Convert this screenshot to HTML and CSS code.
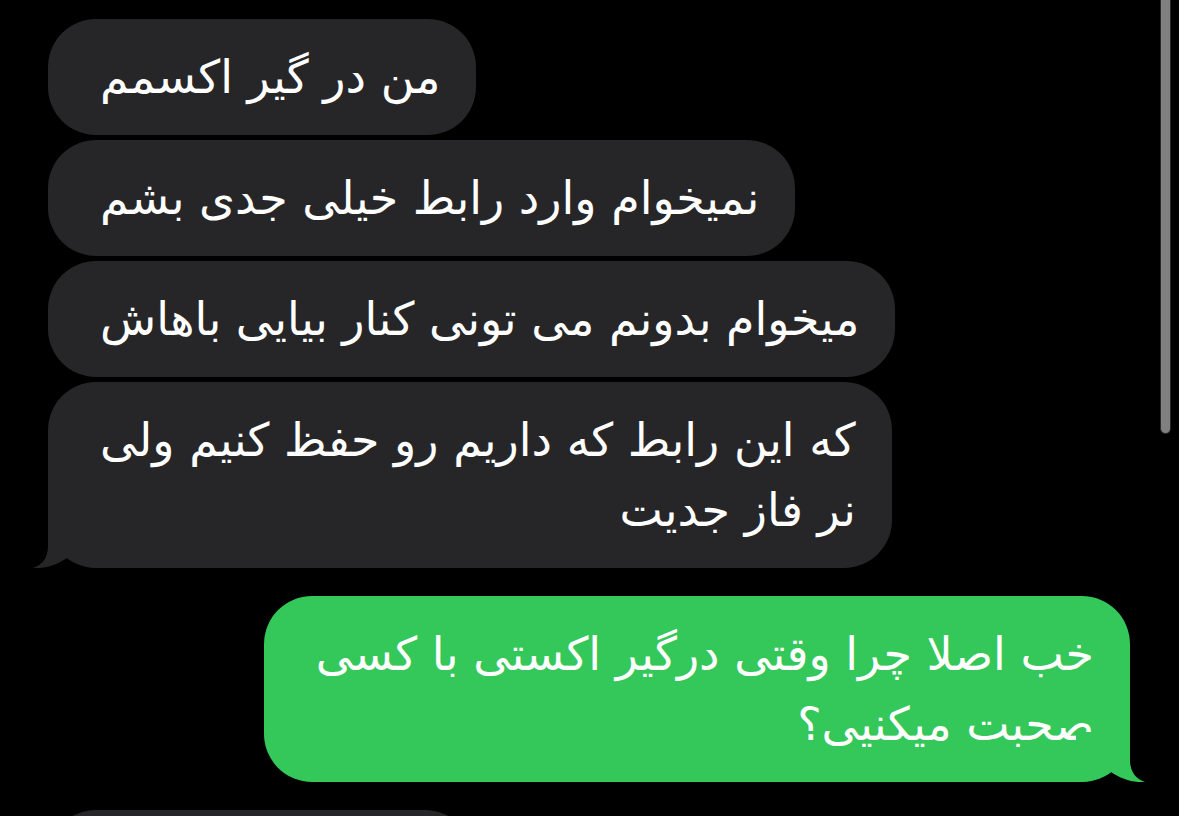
FILE: index.html
```html
<!DOCTYPE html>
<html lang="fa">
<head>
<meta charset="utf-8">
<link rel="stylesheet" href="styles.css">
</head>
<body>
<div class="chat">
  <div class="row in">
    <div class="bubble gray" dir="rtl">من در گیر اکسمم</div>
  </div>
  <div class="row in">
    <div class="bubble gray" dir="rtl">نمیخوام وارد رابط خیلی جدی بشم</div>
  </div>
  <div class="row in">
    <div class="bubble gray" dir="rtl">میخوام بدونم می تونی کنار بیایی باهاش</div>
  </div>
  <div class="row in">
    <div class="bubble gray tailed" dir="rtl">که این رابط که داریم رو حفظ کنیم ولی<br>نر فاز جدیت<svg class="tail tail-left" width="70" height="50" viewBox="0 0 70 50"><path d="M16,0 L16,28 C16,40 10,47 1,50 C12,51 25,47 35,40 C45,47 56,50 70,50 L70,0 Z"/></svg></div>
  </div>
  <div class="row out">
    <div class="bubble green tailed" dir="rtl">خب اصلا چرا وقتی درگیر اکستی با کسی<br>صحبت میکنیی؟<svg class="tail tail-right" width="70" height="50" viewBox="0 0 70 50"><path d="M16,0 L16,28 C16,40 10,47 1,50 C12,51 25,47 35,40 C45,47 56,50 70,50 L70,0 Z"/></svg></div>
  </div>
  <div class="row in next">
    <div class="bubble gray stub"></div>
  </div>
</div>
<div class="scrollbar"></div>
</body>
</html>
```
FILE: styles.css
```css
html, body {
  margin: 0;
  padding: 0;
  background: #000;
  height: 100%;
  overflow: hidden;
}
body {
  position: relative;
  font-family: "DejaVu Sans", "Noto Sans", sans-serif;
}
.chat {
  display: flex;
  flex-direction: column;
  gap: 5px;
  padding: 19px 49px 0 48px;
  height: 816px;
  box-sizing: border-box;
  overflow: hidden;
}
.row {
  display: flex;
  flex-shrink: 0;
}
.row.in {
  justify-content: flex-start;
}
.row.out {
  justify-content: flex-end;
  margin-top: 23px;
}
.row.next {
  margin-top: 23px;
}
.bubble {
  position: relative;
  color: #fff;
  font-size: 46px;
  line-height: 70px;
  padding: 23px 36px 23px 52px;
  border-radius: 48px;
  text-align: right;
  white-space: nowrap;
}
.gray {
  background: #262628;
}
.green {
  background: #34c759;
}
.gray .tail path { fill: #262628; }
.green .tail path { fill: #34c759; }
.tail {
  position: absolute;
  bottom: 0;
  display: block;
}
.tail-left {
  left: -16px;
}
.tail-right {
  right: -16px;
  transform: scaleX(-1);
}
.stub {
  width: 425px;
  height: 116px;
  padding: 0;
  box-sizing: border-box;
}
.scrollbar {
  position: absolute;
  left: 1161px;
  top: -10px;
  width: 9px;
  height: 443px;
  border-radius: 5px;
  background: #808080;
  box-shadow: 0 0 0 1px #2a2a2a;
}
```
